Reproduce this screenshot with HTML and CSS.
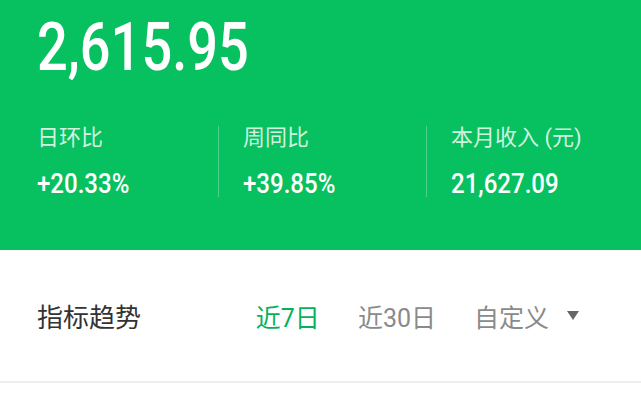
FILE: index.html
```html
<!DOCTYPE html>
<html lang="zh-CN">
<head>
<meta charset="utf-8">
<link rel="stylesheet" href="styles.css">
</head>
<body>
<div class="hero">
  <div class="total">2,615.95</div>
  <div class="stats">
    <div class="stat first">
      <div class="label">日环比</div>
      <div class="value">+20.33%</div>
    </div>
    <div class="stat">
      <div class="label">周同比</div>
      <div class="value">+39.85%</div>
    </div>
    <div class="stat">
      <div class="label">本月收入 (元)</div>
      <div class="value">21,627.09</div>
    </div>
  </div>
</div>
<div class="trend">
  <div class="title">指标趋势</div>
  <div class="tabs">
    <span class="tab active">近7日</span>
    <span class="tab">近30日</span>
    <span class="tab custom">自定义<span class="caret"></span></span>
  </div>
</div>
</body>
</html>
```
FILE: styles.css
```css
html, body {
  margin: 0;
  padding: 0;
  background: #ffffff;
  font-family: Roboto, "Noto Sans CJK SC", sans-serif;
}
.hero {
  background: #07c160;
  height: 250px;
  box-sizing: border-box;
  padding-top: 15px;
  color: #ffffff;
}
.total {
  font-size: 66px;
  line-height: 66px;
  font-weight: 500;
  padding-left: 37px;
  transform: scaleX(0.82);
  transform-origin: 37px 0;
  white-space: nowrap;
}
.stats {
  display: grid;
  grid-template-columns: 218px 208px 1fr;
  margin-top: 45px;
}
.stat {
  padding-left: 24px;
  border-left: 1px solid rgba(255, 255, 255, 0.28);
}
.stat.first {
  padding-left: 37px;
  border-left: none;
}
.label {
  font-size: 22px;
  line-height: 24px;
  color: rgba(255, 255, 255, 0.82);
}
.value {
  font-size: 27px;
  line-height: 25px;
  font-weight: 500;
  margin-top: 22px;
  transform: scaleX(0.89);
  transform-origin: 0 0;
  white-space: nowrap;
}
.trend {
  height: 133px;
  box-sizing: border-box;
  border-bottom: 2px solid #eeeeee;
  display: flex;
  align-items: center;
  justify-content: space-between;
  padding: 0 62px 0 37px;
}
.title {
  font-size: 26px;
  color: #333333;
}
.tabs {
  display: flex;
  align-items: center;
  gap: 38px;
}
.tab {
  font-size: 25px;
  color: #8a8a8a;
  display: flex;
  align-items: center;
}
.tab.active {
  color: #07b15b;
}
.caret {
  width: 0;
  height: 0;
  border-left: 6px solid transparent;
  border-right: 6px solid transparent;
  border-top: 9px solid #666666;
  margin-left: 18px;
}
```
